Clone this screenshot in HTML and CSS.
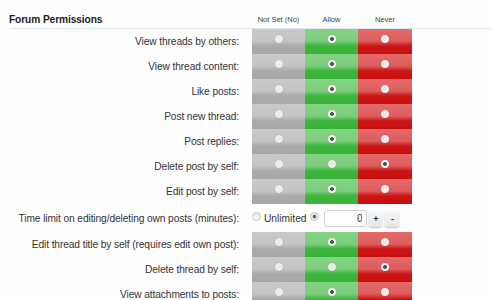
FILE: index.html
```html
<!DOCTYPE html>
<html lang="en">
<head>
    <meta charset="UTF-8">
    <title>Forum Permissions</title>
    <link rel="stylesheet" href="styles.css">
</head>
<body>
    <div class="permissions">
        <div class="perm-header">
            <h3 class="perm-title">Forum Permissions</h3>
            <div class="col-label">Not Set (No)</div>
            <div class="col-label">Allow</div>
            <div class="col-label">Never</div>
        </div>

        <div class="perm-row">
            <label class="perm-label">View threads by others:</label>
            <div class="cell unset"><input type="radio" name="p1"></div>
            <div class="cell allow"><input type="radio" name="p1" checked></div>
            <div class="cell never"><input type="radio" name="p1"></div>
        </div>
        <div class="perm-row">
            <label class="perm-label">View thread content:</label>
            <div class="cell unset"><input type="radio" name="p2"></div>
            <div class="cell allow"><input type="radio" name="p2" checked></div>
            <div class="cell never"><input type="radio" name="p2"></div>
        </div>
        <div class="perm-row">
            <label class="perm-label">Like posts:</label>
            <div class="cell unset"><input type="radio" name="p3"></div>
            <div class="cell allow"><input type="radio" name="p3" checked></div>
            <div class="cell never"><input type="radio" name="p3"></div>
        </div>
        <div class="perm-row">
            <label class="perm-label">Post new thread:</label>
            <div class="cell unset"><input type="radio" name="p4"></div>
            <div class="cell allow"><input type="radio" name="p4" checked></div>
            <div class="cell never"><input type="radio" name="p4"></div>
        </div>
        <div class="perm-row">
            <label class="perm-label">Post replies:</label>
            <div class="cell unset"><input type="radio" name="p5"></div>
            <div class="cell allow"><input type="radio" name="p5" checked></div>
            <div class="cell never"><input type="radio" name="p5"></div>
        </div>
        <div class="perm-row">
            <label class="perm-label">Delete post by self:</label>
            <div class="cell unset"><input type="radio" name="p6"></div>
            <div class="cell allow"><input type="radio" name="p6"></div>
            <div class="cell never"><input type="radio" name="p6" checked></div>
        </div>
        <div class="perm-row">
            <label class="perm-label">Edit post by self:</label>
            <div class="cell unset"><input type="radio" name="p7"></div>
            <div class="cell allow"><input type="radio" name="p7" checked></div>
            <div class="cell never"><input type="radio" name="p7"></div>
        </div>

        <div class="perm-row time-row">
            <label class="perm-label">Time limit on editing/deleting own posts (minutes):</label>
            <div class="time-controls">
                <label class="unlimited"><input type="radio" class="plain-radio" name="p8"> Unlimited</label>
                <input type="radio" class="plain-radio" name="p8" checked>
                <input type="text" class="spin-input" value="0">
                <button class="spin-btn">+</button>
                <button class="spin-btn">-</button>
            </div>
        </div>

        <div class="perm-row">
            <label class="perm-label">Edit thread title by self (requires edit own post):</label>
            <div class="cell unset"><input type="radio" name="p9"></div>
            <div class="cell allow"><input type="radio" name="p9" checked></div>
            <div class="cell never"><input type="radio" name="p9"></div>
        </div>
        <div class="perm-row">
            <label class="perm-label">Delete thread by self:</label>
            <div class="cell unset"><input type="radio" name="p10"></div>
            <div class="cell allow"><input type="radio" name="p10"></div>
            <div class="cell never"><input type="radio" name="p10" checked></div>
        </div>
        <div class="perm-row">
            <label class="perm-label">View attachments to posts:</label>
            <div class="cell unset"><input type="radio" name="p11"></div>
            <div class="cell allow"><input type="radio" name="p11" checked></div>
            <div class="cell never"><input type="radio" name="p11"></div>
        </div>
    </div>
</body>
</html>
```

FILE: styles.css
```css
* {
    box-sizing: border-box;
    margin: 0;
    padding: 0;
}

body {
    background: #fefefe;
    font-family: 'Liberation Sans', Arial, sans-serif;
    font-size: 10.2px;
    color: #333;
    overflow: hidden;
}

.permissions {
    margin-left: 10px;
}

/* Header */
.perm-header {
    display: grid;
    grid-template-columns: 242px 53px 53px 54px;
    align-items: center;
    height: 29px;
    padding-top: 10px;
    border-bottom: 1px solid #dce5f0;
}

.perm-title {
    font-size: 10.2px;
    font-weight: bold;
    color: #222;
    margin-left: -1px;
    letter-spacing: -0.1px;
}

.col-label {
    font-size: 7.5px;
    color: #444;
    text-align: center;
}

/* Rows */
.perm-row {
    display: grid;
    grid-template-columns: 242px 53px 53px 54px;
    height: 25px;
    align-items: stretch;
}

.perm-label {
    display: flex;
    align-items: center;
    justify-content: flex-end;
    padding-right: 13px;
    white-space: nowrap;
    letter-spacing: -0.1px;
}

.cell {
    display: flex;
    justify-content: center;
    padding-top: 6px;
}

.cell.unset {
    background: linear-gradient(to bottom, #c9c9c9 0%, #c4c4c4 48%, #aaaaaa 68%, #a8a8a8 100%);
}

.cell.allow {
    background: linear-gradient(to bottom, #85d385 0%, #7ccd7c 48%, #3cb53c 68%, #38b238 100%);
}

.cell.never {
    background: linear-gradient(to bottom, #e46a6a 0%, #de5d5d 48%, #cc1414 68%, #c81010 100%);
}

.cell input {
    appearance: none;
    width: 8px;
    height: 8px;
    border-radius: 50%;
    background: #ececec;
    box-shadow: 0 0 1px rgba(0,0,0,0.25);
    margin: 0;
}

.cell input:checked {
    background: radial-gradient(circle, #555 0, #555 1.6px, #f2f2f2 2.2px);
}

/* Time limit row */
.time-row {
    height: 28px;
    grid-template-columns: 242px auto;
}

.time-controls {
    display: flex;
    align-items: center;
    padding-top: 1px;
}

.unlimited {
    display: flex;
    align-items: center;
    font-size: 10.2px;
    color: #333;
    margin-right: 4px;
}

.plain-radio {
    appearance: none;
    width: 9px;
    height: 9px;
    border-radius: 50%;
    border: 1px solid #c4c4c4;
    background: linear-gradient(to bottom, #e6e6e6, #fafafa);
    margin: -4px 3px 0 0;
}

.plain-radio:checked {
    background: radial-gradient(circle, #666 0, #666 1.4px, #e8e8e8 2.2px);
}

.spin-input {
    width: 43px;
    height: 17px;
    margin-left: 2px;
    border: 1px solid #d2d2d2;
    border-radius: 3px;
    font-family: 'Liberation Sans', Arial, sans-serif;
    font-size: 10px;
    color: #333;
    text-align: right;
    padding-right: 4px;
    background: #fff;
}

.spin-btn {
    width: 13px;
    height: 16px;
    margin-left: 2px;
    border: none;
    border-radius: 3px;
    background: linear-gradient(to bottom, #fafafa, #e4e4e4);
    box-shadow: 0 1px 2px rgba(0,0,0,0.25);
    font-family: 'Liberation Sans', Arial, sans-serif;
    font-size: 9px;
    font-weight: bold;
    color: #333;
}

.spin-btn + .spin-btn {
    width: 14px;
    margin-left: 3px;
}
```
